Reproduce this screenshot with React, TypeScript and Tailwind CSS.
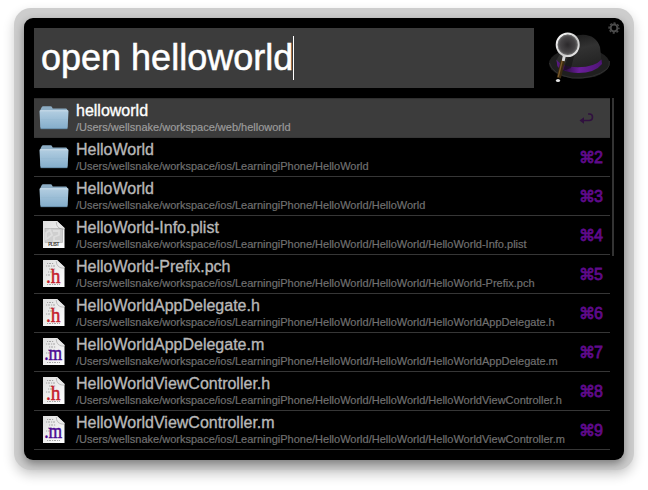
type Kind = "folder" | "plist" | "h" | "m";

const base = "/Users/wellsnake/workspace/ios/LearningiPhone/HelloWorld";
const rows: { kind: Kind; title: string; path: string }[] = [
  { kind: "folder", title: "helloworld", path: "/Users/wellsnake/workspace/web/helloworld" },
  { kind: "folder", title: "HelloWorld", path: base },
  { kind: "folder", title: "HelloWorld", path: base + "/HelloWorld" },
  { kind: "plist", title: "HelloWorld-Info.plist", path: base + "/HelloWorld/HelloWorld-Info.plist" },
  { kind: "h", title: "HelloWorld-Prefix.pch", path: base + "/HelloWorld/HelloWorld-Prefix.pch" },
  { kind: "h", title: "HelloWorldAppDelegate.h", path: base + "/HelloWorld/HelloWorldAppDelegate.h" },
  { kind: "m", title: "HelloWorldAppDelegate.m", path: base + "/HelloWorld/HelloWorldAppDelegate.m" },
  { kind: "h", title: "HelloWorldViewController.h", path: base + "/HelloWorld/HelloWorldViewController.h" },
  { kind: "m", title: "HelloWorldViewController.m", path: base + "/HelloWorld/HelloWorldViewController.m" },
];

function Gradients() {
  return (
    <svg width="0" height="0" className="absolute">
      <defs>
        <linearGradient id="folder" x1="0" y1="0" x2="0" y2="1">
          <stop offset="0" stopColor="#b3cee1" />
          <stop offset="1" stopColor="#83adcb" />
        </linearGradient>
        <linearGradient id="paper" x1="0" y1="0" x2="1" y2="1">
          <stop offset="0" stopColor="#dedede" />
          <stop offset="0.5" stopColor="#eeeeee" />
          <stop offset="1" stopColor="#ffffff" />
        </linearGradient>
        <linearGradient id="fold" x1="0" y1="1" x2="1" y2="0">
          <stop offset="0" stopColor="#ffffff" />
          <stop offset="1" stopColor="#c9c9c9" />
        </linearGradient>
        <linearGradient id="crown" x1="0" y1="0" x2="0.3" y2="1">
          <stop offset="0" stopColor="#151515" />
          <stop offset="0.5" stopColor="#323232" />
          <stop offset="1" stopColor="#242424" />
        </linearGradient>
        <linearGradient id="band" x1="0" y1="0" x2="1" y2="0">
          <stop offset="0" stopColor="#5c1b87" />
          <stop offset="0.22" stopColor="#35104e" />
          <stop offset="0.5" stopColor="#6a1e9a" />
          <stop offset="1" stopColor="#4f1576" />
        </linearGradient>
        <radialGradient id="lens">
          <stop offset="0" stopColor="#2b292b" />
          <stop offset="0.65" stopColor="#454345" />
          <stop offset="1" stopColor="#686868" />
        </radialGradient>
        <linearGradient id="rim" x1="0" y1="0" x2="1" y2="1">
          <stop offset="0" stopColor="#ffffff" />
          <stop offset="0.6" stopColor="#c8c8c8" />
          <stop offset="1" stopColor="#eeeeee" />
        </linearGradient>
      </defs>
    </svg>
  );
}

function FileIcon({ kind }: { kind: Kind }) {
  if (kind === "folder") {
    return (
      <svg width="32" height="32" viewBox="0 0 32 32">
        <path d="M2.5 7.500 3.500 5.500Q4 4.200 5.200 4.200H12.500Q13.800 4.200 14.200 5.500L14.700 6.500H28Q29.300 6.500 29.300 8V25H2.500Z" fill="#8cacc3" />
        <path d="M1.500 9.200Q1.400 8.300 2.700 8.300H29.300Q30.600 8.300 30.500 9.200L29.600 26Q29.500 27 28.500 27H3.500Q2.500 27 2.400 26Z" fill="url(#folder)" />
        <path d="M2 8.800H30" stroke="#cfe1ed" strokeWidth="0.8" />
        <path d="M2.400 17.500H30" stroke="#94b8d1" strokeWidth="0.5" />
        <path d="M2.800 26.700H29.200" stroke="#5f84a0" strokeWidth="0.8" />
      </svg>
    );
  }
  return (
    <svg width="32" height="32" viewBox="0 0 32 32">
      <path d="M5 2H19L26.500 9V29H5Z" fill="url(#paper)" />
      {kind === "plist" ? (
        <>
          <rect x="7" y="9.500" width="17.500" height="14" fill="#cfcfcf" stroke="#b2b2b2" strokeWidth="0.7" />
          <path d="M8 20V14L12 11 14 16 10 19ZM15 12H21V16L16 18V22H22" fill="none" stroke="#dedede" strokeWidth="1.800" />
          <text x="15.800" y="27.400" textAnchor="middle" fontSize="4.500" fontWeight="700" fill="#333" fontFamily="Liberation Sans, sans-serif" textLength="11">PLIST</text>
        </>
      ) : (
        <>
          <g fill="none" stroke="#a6a6a6" strokeWidth="1" strokeDasharray="1.2 0.8 2 1">
            <path d="M9 5.500H16M8 8H17M11 11H18M10 14H15M8 17H13M9 26.500H22" />
          </g>
          <text
            x={kind === "h" ? "15.2" : "15.2"}
            y={kind === "h" ? "24.7" : "24"}
            textAnchor="middle"
            fontSize={kind === "h" ? "21" : "20"}
            fill={kind === "h" ? "#c5202b" : "#4b0a93"}
            stroke={kind === "h" ? "#c5202b" : "#4b0a93"}
            strokeWidth="0.5"
            textLength={kind === "h" ? "14.5" : "18"}
            lengthAdjust="spacingAndGlyphs"
            fontFamily="Liberation Serif, serif"
          >
            {"." + kind}
          </text>
        </>
      )}
      <path d="M18.500 2H19L26.500 9V9.800Q19.500 10 18.500 2Z" fill="url(#fold)" />
      <path d="M18.200 3Q18.500 10.500 26.500 10.200" fill="none" stroke="#888" strokeWidth="0.8" opacity="0.6" />
    </svg>
  );
}

function HatLogo() {
  return (
    <svg width="64" height="54" viewBox="0 0 64 54">
      <ellipse cx="32.300" cy="35.500" rx="30.300" ry="15.200" fill="#1f1f1f" />
      <path d="M2.500 35Q5 46 25 50Q48 51 60 41Q63 38 62.300 33" fill="none" stroke="#303030" strokeWidth="1" />
      <path d="M9 33Q15 22 19 16Q25 6.500 36 6.700Q49 7 53 19Q54 25 54 33Q50 42 32 42Q15 41 9 33Z" fill="url(#crown)" />
      <path d="M9.500 31.500Q14 39 31 39.300Q48 39 54.500 31.500L55 36Q48 45 31 45Q14 44 10.300 38Z" fill="url(#band)" />
      <path d="M20 31 28 24 24 40 16 43Z" fill="#101010" opacity="0.55" />
      <path d="M16 32 11.800 50" stroke="#3b2a10" strokeWidth="4.200" />
      <path d="M15.200 33 11.200 49" stroke="#79592a" strokeWidth="1.300" />
      <path d="M17.500 27 16.200 33" stroke="#d8d8d8" strokeWidth="3" />
      <ellipse cx="11" cy="52.400" rx="2.100" ry="1.500" fill="#e5e5e5" />
      <ellipse cx="20.700" cy="16.800" rx="11" ry="11.300" fill="url(#lens)" stroke="url(#rim)" strokeWidth="2" />
      <circle cx="20.700" cy="16.800" r="9.700" fill="none" stroke="#777" strokeWidth="0.500" />
    </svg>
  );
}

function Gear() {
  return (
    <svg width="12" height="12" viewBox="0 0 12 12" fill="none" stroke="#4b4b4b">
      <circle cx="6" cy="6" r="3.400" strokeWidth="2" />
      <circle cx="6" cy="6" r="4.900" strokeWidth="1.500" strokeDasharray="2.1 1.748" strokeDashoffset="1" />
    </svg>
  );
}

export default function App() {
  return (
    <div className="h-[490px] w-[648px] overflow-hidden bg-white px-[14px] pt-2 font-['Liberation_Sans',Arial,sans-serif]">
      <Gradients />
      <div className="h-[462px] w-[620px] rounded-[17px] bg-[#cdcdcd] p-[10px] shadow-[0_5px_12px_rgba(0,0,0,0.2)]">
        <div className="flex h-[442px] flex-col rounded-[9px] bg-black px-[10px] pt-[10px] shadow-[0_4px_10px_rgba(0,0,0,0.4)]">
          <header className="flex h-[60px]">
            <div className="flex h-[60px] w-[500px] items-center bg-[#3c3c3c] pl-[7px]">
              <span className="text-[36px] leading-[60px] whitespace-pre text-white [-webkit-text-stroke:0.5px]">open helloworld</span>
              <i className="h-11 w-px bg-white" />
            </div>
            <div className="relative ml-[13px] w-[64px]">
              <HatLogo />
              <div className="absolute -top-[6px] left-[60.500px]"><Gear /></div>
            </div>
          </header>
          <div className="mt-[10px] flex">
            <ul className="w-[576px] border-t border-[#303030]">
              {rows.map((row, i) => (
                <li key={i} className={"flex h-[39px] border-b border-[#363636] pl-1 " + (i === 0 ? "bg-[#3c3c3c]" : "")}>
                  <div className="h-8 w-8 pt-[3px]"><FileIcon kind={row.kind} /></div>
                  <div className="ml-[6px] flex-1 whitespace-nowrap">
                    <div className={"mt-[3px] h-[18px] text-[16px] leading-[18px] [-webkit-text-stroke:0.35px] " + (i === 0 ? "text-white" : "text-[#b8b8b8]")}>{row.title}</div>
                    <div className={"mt-[1px] h-[13px] text-[11px] leading-[13px] [-webkit-text-stroke:0.2px] " + (i === 0 ? "text-[#9b9b9b]" : "text-[#707070]")}>{row.path}</div>
                  </div>
                  <div className="flex w-[31px] items-center text-[#5f0a8a]">
                    {i === 0 ? (
                      <svg width="15" height="12" viewBox="0 0 15 12" fill="none" stroke="#30103f" strokeWidth="1.6" className="mt-[2px]">
                        <path d="M9 1H10.500Q13.500 1 13.500 4Q13.500 7.500 10 7.500H3" />
                        <path d="M0.500 7.500 5 4.200V10.800Z" fill="#30103f" stroke="none" />
                      </svg>
                    ) : (
                      <>
                        <span className="w-[15px] pt-[1px] font-['DejaVu_Sans',sans-serif] text-[16px] leading-4 [-webkit-text-stroke:0.8px]">⌘</span>
                        <span className="pt-[1px] text-[16px] leading-4 [-webkit-text-stroke:0.8px]">{i + 1}</span>
                      </>
                    )}
                  </div>
                </li>
              ))}
            </ul>
            <div className="ml-[2px] h-[158px] w-[2px] bg-[#333333]" />
          </div>
        </div>
      </div>
    </div>
  );
}
